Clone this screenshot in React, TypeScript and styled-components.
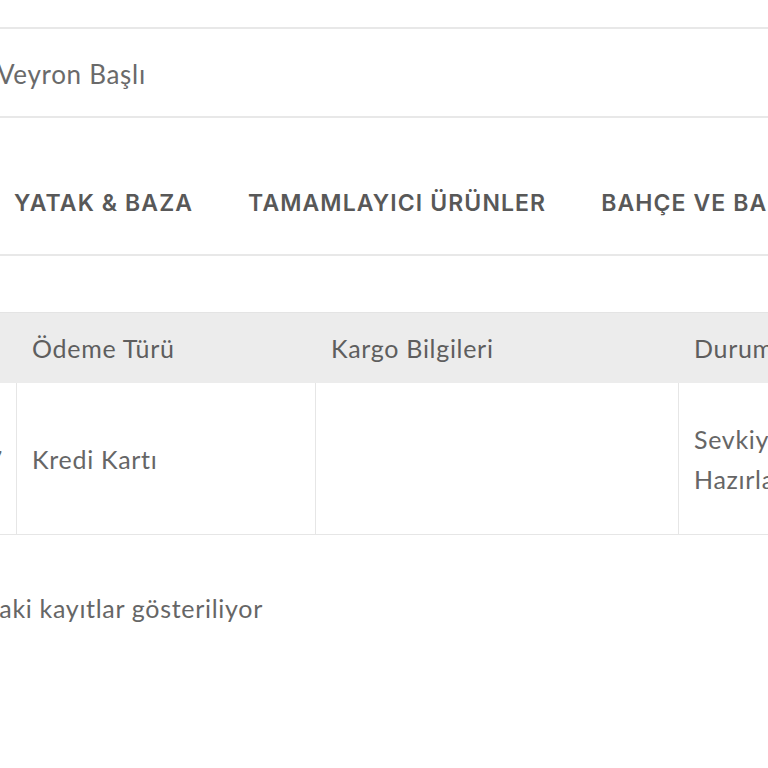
import styled, { createGlobalStyle } from "styled-components";

const GlobalStyle = createGlobalStyle`
  html, body {
    margin: 0;
    padding: 0;
    background: #ffffff;
    overflow: hidden;
  }
  body {
    font-family: "Lato", "Noto Sans", sans-serif;
    color: #666666;
  }
`;

const Page = styled.div`
  width: 768px;
  height: 768px;
  overflow: hidden;
  display: flex;
  flex-direction: column;
`;

const CustomerRow = styled.div`
  margin-top: 27px;
  height: 87px;
  border-top: 2px solid #e8e8e8;
  border-bottom: 2px solid #e8e8e8;
  display: flex;
  align-items: center;
  font-size: 26px;
  letter-spacing: 0.7px;
  color: #6a6a6a;

  & span {
    margin-left: -3px;
    padding-top: 2px;
  }
`;

const MenuBar = styled.nav`
  height: 138px;
  border-bottom: 2px solid #e8e8e8;
  display: flex;
  align-items: flex-start;
  gap: 55px;
  padding: 70px 0 0 14px;
  box-sizing: border-box;
  white-space: nowrap;
`;

const MenuItem = styled.a`
  font-family: "Inter", "Noto Sans", sans-serif;
  font-weight: 600;
  font-size: 23px;
  line-height: 30px;
  letter-spacing: 1.1px;
  color: #585858;
  text-decoration: none;
  flex-shrink: 0;
`;

const OrderGrid = styled.div`
  margin-top: 56px;
  display: grid;
  grid-template-columns: 16px 299px 363px 170px 300px;
  font-size: 25px;
  letter-spacing: 0.7px;
`;

const HeadCell = styled.div`
  height: 71px;
  background: #ececec;
  border-top: 1px solid #e4e4e4;
  box-sizing: border-box;
  display: flex;
  align-items: center;
  padding-left: 16px;
  color: #5e5e5e;
  white-space: nowrap;
  overflow: hidden;
`;

const BodyCell = styled.div<{ $clip?: boolean }>`
  height: 152px;
  box-sizing: border-box;
  border-bottom: 1px solid #e6e6e6;
  border-left: ${(p) => (p.$clip ? "none" : "1px solid #e6e6e6")};
  display: flex;
  align-items: center;
  justify-content: ${(p) => (p.$clip ? "flex-end" : "flex-start")};
  padding: ${(p) => (p.$clip ? "0 13px 0 0" : "0 0 0 15px")};
  line-height: 40px;
  color: #666666;
  overflow: ${(p) => (p.$clip ? "hidden" : "visible")};
  white-space: ${(p) => (p.$clip ? "nowrap" : "normal")};
`;

const StatusText = styled.div`
  width: 150px;
  flex-shrink: 0;
`;

const InfoLine = styled.div`
  margin-top: 58px;
  width: 263px;
  display: flex;
  justify-content: flex-end;
  overflow: hidden;
  white-space: nowrap;
  font-size: 25px;
  letter-spacing: 0.7px;
  line-height: 30px;
  color: #666666;

  & span {
    flex-shrink: 0;
  }
`;

const menu = ["YATAK & BAZA", "TAMAMLAYICI ÜRÜNLER", "BAHÇE VE BALKON"];

export default function App() {
  return (
    <>
      <GlobalStyle />
      <Page>
        <CustomerRow>
          <span>Veyron Başlı</span>
        </CustomerRow>
        <MenuBar>
          {menu.map((m) => (
            <MenuItem key={m} href="#">
              {m}
            </MenuItem>
          ))}
        </MenuBar>
        <OrderGrid>
          <HeadCell />
          <HeadCell>Ödeme Türü</HeadCell>
          <HeadCell>Kargo Bilgileri</HeadCell>
          <HeadCell>Durum</HeadCell>
          <HeadCell>İşlemler</HeadCell>
          <BodyCell $clip>
            <span>12.07.2024 14:27</span>
          </BodyCell>
          <BodyCell>Kredi Kartı</BodyCell>
          <BodyCell />
          <BodyCell>
            <StatusText>Sevkiyata Hazırlanıyor</StatusText>
          </BodyCell>
          <BodyCell />
        </OrderGrid>
        <InfoLine>
          <span>1 ile 1 arasındaki kayıtlar gösteriliyor</span>
        </InfoLine>
      </Page>
    </>
  );
}
